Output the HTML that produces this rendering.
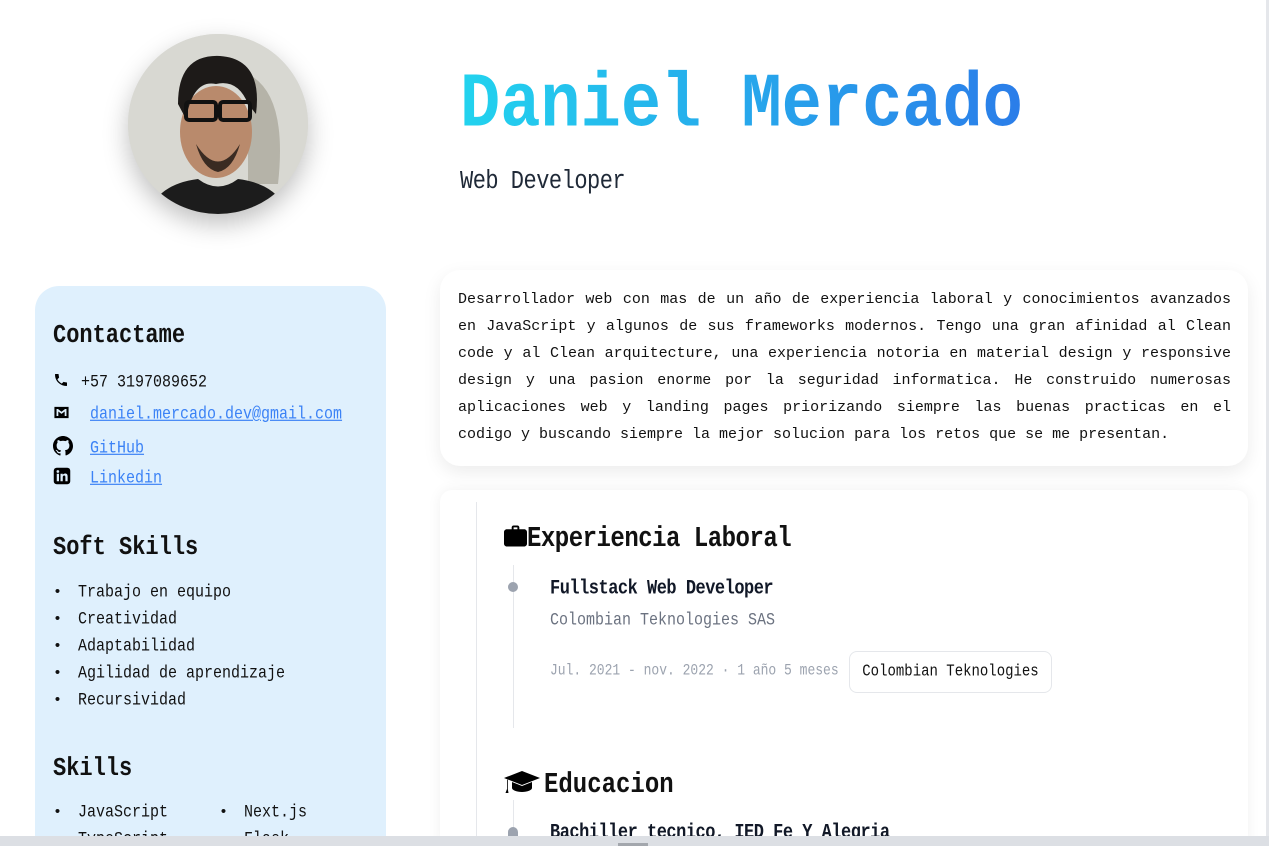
<!DOCTYPE html>
<html><head><meta charset="utf-8"><style>
*{margin:0;padding:0;box-sizing:border-box}
html,body{width:1269px;height:846px;overflow:hidden}
body{background:#fff;font-family:"Liberation Mono","DejaVu Sans Mono",monospace;color:#111;position:relative}
.a{position:absolute;white-space:nowrap}
.t{transform:scaleY(1.18);transform-origin:left center;display:inline-block}
a{color:#3b82f6;text-decoration:underline}
.b{display:inline-block;width:25px}
</style></head><body>
<div class="a" style="left:1266px;top:0;width:3px;height:846px;background:#e5e7eb"></div>
<!-- photo -->
<div class="a" style="left:128px;top:34px;width:180px;height:180px;border-radius:50%;overflow:hidden;box-shadow:0 10px 25px rgba(0,0,0,.25);background:#d6d6d0">
<svg width="180" height="180" viewBox="0 0 180 180">
<rect width="180" height="180" fill="#d8d8d2"/>
<path d="M120 40 Q160 60 150 150 L120 150Z" fill="#b5b3a8"/>
<ellipse cx="88" cy="98" rx="36" ry="46" fill="#b98a6c"/>
<path d="M50 70 Q50 20 92 22 Q135 25 128 80 L120 70 Q110 45 88 50 Q65 45 58 85Z" fill="#1d1a18"/>
<rect x="58" y="68" width="30" height="18" rx="3" fill="none" stroke="#111" stroke-width="4"/>
<rect x="92" y="68" width="30" height="18" rx="3" fill="none" stroke="#111" stroke-width="4"/>
<path d="M68 110 Q90 145 112 110 Q105 135 90 138 Q75 135 68 110Z" fill="#3a2b22"/>
<path d="M20 180 Q30 150 70 145 Q90 160 110 145 Q150 150 160 180Z" fill="#1c1c1c"/>
</svg></div>
<!-- name -->
<div class="a" style="left:460px;top:66px;font-size:67px;font-weight:bold;line-height:80px;letter-spacing:0"><span class="t" style="transform:scaleY(1.15);background:linear-gradient(90deg,#22d3ee,#2b7de9);-webkit-background-clip:text;background-clip:text;color:transparent">Daniel Mercado</span></div>
<div class="a" style="left:460px;top:168px;font-size:22px;line-height:28px;color:#1f2937;letter-spacing:-.5px"><span class="t">Web Developer</span></div>
<!-- left card -->
<div class="a" style="left:35px;top:286px;width:351px;height:560px;background:#dff0fd;border-radius:24px 24px 0 0"></div>
<div class="a" style="left:53px;top:321px;font-size:22px;font-weight:bold;line-height:30px"><span class="t">Contactame</span></div>
<div class="a" style="left:53px;top:372px;font-size:15px;line-height:20px">
<svg width="16" height="16" viewBox="0 0 24 24" style="vertical-align:-2px;margin-right:12px"><path d="M6.6 10.8a15 15 0 006.6 6.6l2.2-2.2c.3-.3.7-.4 1-.2 1.1.4 2.3.6 3.6.6.6 0 1 .4 1 1V20c0 .6-.4 1-1 1A17 17 0 013 4c0-.6.4-1 1-1h3.5c.6 0 1 .4 1 1 0 1.3.2 2.5.6 3.6.1.3 0 .7-.2 1z"/></svg><span class="t">+57 3197089652</span></div>
<div class="a" style="left:53px;top:404px;font-size:15px;line-height:20px"><svg width="17" height="17" viewBox="0 0 24 24" style="vertical-align:-3px;margin-right:20px"><path d="M2 4h20v16H2z M5 7v10h2.5v-6.5L12 14l4.5-3.5V17H19V7h-2l-5 4-5-4z" fill-rule="evenodd"/></svg><a class="t">daniel.mercado.dev@gmail.com</a></div>
<div class="a" style="left:53px;top:436px;font-size:15px;line-height:20px"><svg width="20" height="20" viewBox="0 0 16 16" style="vertical-align:-4px;margin-right:17px"><path d="M8 0C3.6 0 0 3.6 0 8c0 3.5 2.3 6.5 5.5 7.6.4.1.5-.2.5-.4v-1.4c-2.2.5-2.7-1-2.7-1-.4-.9-.9-1.200-.9-1.2-.7-.5.1-.5.1-.5.8.1 1.2.8 1.2.8.7 1.2 1.9.9 2.3.7.1-.5.3-.9.5-1.1-1.8-.2-3.6-.9-3.6-4 0-.9.3-1.6.8-2.100-.1-.2-.4-1 .1-2.1 0 0 .7-.2 2.2.8.6-.2 1.3-.3 2-.3s1.4.1 2 .3c1.5-1 2.2-.8 2.2-.8.4 1.1.2 1.9.1 2.1.5.6.8 1.3.8 2.1 0 3.1-1.9 3.7-3.6 3.9.3.3.5.8.5 1.5v2.2c0 .2.1.5.6.4C13.7 14.5 16 11.5 16 8c0-4.4-3.6-8-8-8z"/></svg><a class="t">GitHub</a></div>
<div class="a" style="left:53px;top:467px;font-size:15px;line-height:20px"><svg width="18" height="18" viewBox="0 0 24 24" style="vertical-align:-3px;margin-right:19px"><rect x="1" y="1" width="22" height="22" rx="4"/><rect x="5" y="9" width="3" height="10" fill="#dff0fd"/><circle cx="6.5" cy="6" r="1.8" fill="#dff0fd"/><path d="M10 9h3v1.5c.7-1.2 2-1.8 3.3-1.8 2.3 0 3.2 1.5 3.2 4V19h-3v-5.5c0-1.3-.4-2.1-1.6-2.1S13 12.3 13 13.5V19h-3z" fill="#dff0fd"/></svg><a class="t">Linkedin</a></div>
<div class="a" style="left:53px;top:533px;font-size:22px;font-weight:bold;line-height:30px"><span class="t">Soft Skills</span></div>
<div class="a" style="left:53px;top:579px;font-size:15px;line-height:27px">
<div><span class="b">•</span><span class="t">Trabajo en equipo</span></div><div><span class="b">•</span><span class="t">Creatividad</span></div><div><span class="b">•</span><span class="t">Adaptabilidad</span></div><div><span class="b">•</span><span class="t">Agilidad de aprendizaje</span></div><div><span class="b">•</span><span class="t">Recursividad</span></div></div>
<div class="a" style="left:53px;top:754px;font-size:22px;font-weight:bold;line-height:30px"><span class="t">Skills</span></div>
<div class="a" style="left:53px;top:799px;font-size:15px;line-height:27px"><div><span class="b">•</span><span class="t">JavaScript</span></div><div><span class="b">•</span><span class="t">TypeScript</span></div></div>
<div class="a" style="left:219px;top:799px;font-size:15px;line-height:27px"><div><span class="b">•</span><span class="t">Next.js</span></div><div><span class="b">•</span><span class="t">Flask</span></div></div>
<!-- about -->
<div class="a" style="left:440px;top:270px;width:808px;height:196px;background:#fff;border-radius:20px;box-shadow:0 6px 18px rgba(0,0,0,.08)"></div>
<div class="a" style="left:458px;top:286px;width:773px;white-space:normal;text-align:justify;font-size:15px;line-height:27px;color:#111">Desarrollador web con mas de un año de experiencia laboral y conocimientos avanzados en JavaScript y algunos de sus frameworks modernos. Tengo una gran afinidad al Clean code y al Clean arquitecture, una experiencia notoria en material design y responsive design y una pasion enorme por la seguridad informatica. He construido numerosas aplicaciones web y landing pages priorizando siempre las buenas practicas en el codigo y buscando siempre la mejor solucion para los retos que se me presentan.</div>
<!-- experience -->
<div class="a" style="left:440px;top:490px;width:808px;height:356px;background:#fff;border-radius:12px 12px 0 0;box-shadow:0 0 14px rgba(0,0,0,.06)"></div>
<div class="a" style="left:476px;top:502px;width:1px;height:334px;background:#e5e7eb"></div>
<div class="a" style="left:504px;top:525px;font-size:24px;font-weight:bold;line-height:30px"><svg width="23" height="22" viewBox="0 0 24 22" style="vertical-align:-2px"><path d="M8 4V2c0-1 .8-2 2-2h4c1.2 0 2 1 2 2v2h5c1.7 0 3 1.3 3 3v12c0 1.7-1.3 3-3 3H3c-1.7 0-3-1.3-3-3V7c0-1.7 1.3-3 3-3zm2 0h4V2h-4z"/></svg><span class="t" style="letter-spacing:-.5px">Experiencia Laboral</span></div>
<div class="a" style="left:513px;top:565px;width:1px;height:163px;background:#e5e7eb"></div>
<div class="a" style="left:508px;top:582px;width:10px;height:10px;border-radius:50%;background:#9ca3af"></div>
<div class="a" style="left:550px;top:578px;font-size:17px;font-weight:bold;line-height:24px;color:#111827;letter-spacing:-.5px"><span class="t">Fullstack Web Developer</span></div>
<div class="a" style="left:550px;top:610px;font-size:15px;line-height:22px;color:#6b7280"><span class="t">Colombian Teknologies SAS</span></div>
<div class="a" style="left:550px;top:662px;font-size:13px;line-height:18px;color:#9ca3af"><span class="t">Jul. 2021 - nov. 2022 · 1 año 5 meses</span></div>
<div class="a" style="left:849px;top:651px;width:203px;height:42px;border:1px solid #e5e7eb;border-radius:8px;font-size:14px;line-height:40px;text-align:center;color:#111"><span class="t">Colombian Teknologies</span></div>
<div class="a" style="left:504px;top:769px;font-size:24px;font-weight:bold;line-height:30px"><svg width="36" height="26" viewBox="0 0 36 26" style="vertical-align:-4px;margin-right:4px"><path d="M18 2L0 9l18 7 18-7zM8 13v6c0 2 4.5 4 10 4s10-2 10-4v-6l-10 4zM3 10.5V20l-1.5 4h3L3.8 20V11z"/></svg><span class="t">Educacion</span></div>
<div class="a" style="left:513px;top:800px;width:1px;height:36px;background:#e5e7eb"></div>
<div class="a" style="left:508px;top:827px;width:10px;height:9px;border-radius:5px 5px 0 0;background:#9ca3af"></div>
<div class="a" style="left:550px;top:822px;height:14px;overflow:hidden;font-size:17px;font-weight:bold;line-height:24px;color:#111827;letter-spacing:-.5px"><span class="t">Bachiller tecnico, IED Fe Y Alegria</span></div>
<!-- scrollbar -->
<div class="a" style="left:0;top:836px;width:1269px;height:10px;background:#dcdfe4"></div>
<div class="a" style="left:618px;top:843px;width:30px;height:3px;background:#a3a7ad"></div>
</body></html>
